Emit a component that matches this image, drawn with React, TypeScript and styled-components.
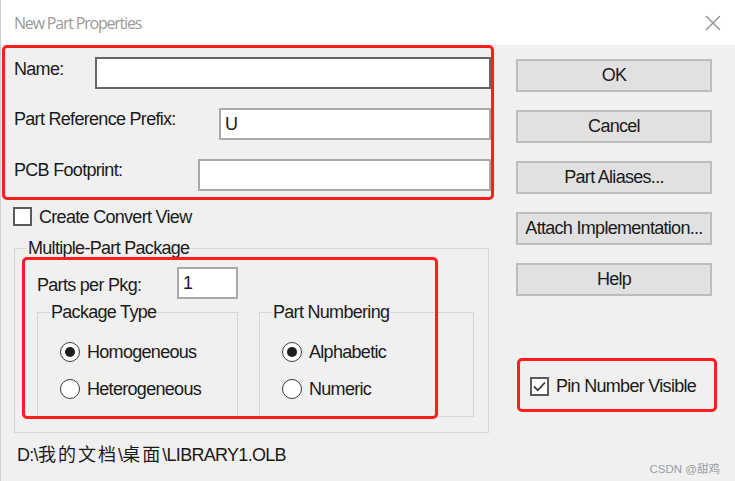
import styled, { createGlobalStyle } from "styled-components";

const GlobalStyle = createGlobalStyle`
  html, body {
    margin: 0;
    padding: 0;
    background: #f0f0f0;
  }
  * {
    box-sizing: border-box;
  }
`;

const Window = styled.div`
  width: 735px;
  height: 481px;
  background: #f0f0f0;
  border-left: 1px solid #cfcfcf;
  display: flex;
  flex-direction: column;
  overflow: hidden;
  font-family: "Liberation Sans", Arial, sans-serif;
  font-size: 18px;
  letter-spacing: -0.7px;
  color: #1a1a1a;
`;

const TitleBar = styled.div`
  height: 45px;
  flex: none;
  background: #fff;
  display: flex;
  align-items: center;
  justify-content: space-between;
  padding: 0 14px 0 13px;
`;

const Title = styled.div`
  font-family: "Open Sans", "Noto Sans", sans-serif;
  font-size: 16px;
  letter-spacing: -1.2px;
  color: #9a9a9a;
`;

const CloseIcon = styled.svg`
  width: 16px;
  height: 16px;
  display: block;
`;

const Body = styled.div`
  flex: 1;
  display: flex;
`;

const LeftCol = styled.div`
  width: 495px;
  flex: none;
  display: flex;
  flex-direction: column;
  align-items: flex-start;
`;

const RightCol = styled.div`
  flex: 1;
  display: flex;
  flex-direction: column;
  align-items: flex-start;
  padding-top: 14px;
`;

const Highlight = styled.div`
  border: 3px solid #fe1e1e;
  border-radius: 5px;
`;

const FieldsFrame = styled(Highlight)`
  margin-left: 1px;
  width: 492px;
  height: 155px;
  padding: 9px 0 0 9px;
  display: flex;
  flex-direction: column;
  gap: 19px;
`;

const FieldRow = styled.div`
  display: flex;
  align-items: flex-start;
  height: 32px;
`;

const Label = styled.label<{ $w: number; $top?: number }>`
  width: ${(p) => p.$w}px;
  flex: none;
  line-height: 18px;
  padding-top: ${(p) => p.$top ?? 2}px;
  white-space: nowrap;
`;

const TextBox = styled.div<{ $focus?: boolean; $w?: number }>`
  ${(p) => (p.$w ? `width: ${p.$w}px; flex: none;` : "flex: 1;")}
  height: 32px;
  background: #fff;
  border: 2px solid ${(p) => (p.$focus ? "#666666" : "#a9a9a9")};
  padding: 0 4px;
  display: flex;
  align-items: center;
  line-height: 18px;
`;

const CheckRow = styled.label`
  display: flex;
  align-items: center;
  gap: 7px;
  line-height: 18px;
  white-space: nowrap;
`;

const ConvertRow = styled(CheckRow)`
  margin: 7px 0 0 12px;
`;

const CheckBox = styled.span`
  width: 19px;
  height: 19px;
  flex: none;
  background: #fff;
  border: 2px solid #5a5a5a;
  display: flex;
  align-items: center;
  justify-content: center;
`;

const GroupWrap = styled.div`
  position: relative;
  margin: 13px 0 0 13px;
  width: 475px;
`;

const Group = styled.fieldset<{ $w?: number }>`
  margin: 0;
  padding: 0;
  min-width: 0;
  ${(p) => (p.$w ? `width: ${p.$w}px;` : "width: 100%;")}
  border: 1px solid #d6d6d6;
`;

const Legend = styled.legend`
  margin-left: 12px;
  padding: 0 1px;
  line-height: 18px;
  font-size: 18px;
`;

const MultiBody = styled.div`
  padding: 10px 0 15px 22px;
  display: flex;
  flex-direction: column;
  gap: 4px;
`;

const PartsRow = styled.div`
  display: flex;
  align-items: flex-start;
  height: 32px;
`;

const SubRow = styled.div`
  display: flex;
  gap: 21px;
`;

const SubBody = styled.div`
  padding: 20px 0 16px 22px;
  display: flex;
  flex-direction: column;
  gap: 15px;
`;

const RadioRow = styled.label`
  display: flex;
  align-items: center;
  gap: 7px;
  height: 22px;
  line-height: 18px;
  white-space: nowrap;
`;

const Radio = styled.span<{ $on?: boolean }>`
  width: 20px;
  height: 20px;
  flex: none;
  border-radius: 50%;
  background: #fff;
  border: 1.5px solid #3a3a3a;
  display: flex;
  align-items: center;
  justify-content: center;
  &::after {
    content: "";
    width: 10px;
    height: 10px;
    border-radius: 50%;
    background: ${(p) => (p.$on ? "#1e1e1e" : "transparent")};
  }
`;

const GroupHighlight = styled(Highlight)`
  position: absolute;
  left: 8px;
  top: 18px;
  width: 416px;
  height: 162px;
  pointer-events: none;
`;

const PathText = styled.div`
  margin: 13px 0 0 16px;
  line-height: 18px;
  white-space: nowrap;
  font-family: "Liberation Sans", "Noto Sans CJK SC", sans-serif;
`;

const Cjk = styled.span`
  letter-spacing: 2px;
`;

const Button = styled.button`
  margin-left: 20px;
  width: 196px;
  height: 33px;
  background: #e1e1e1;
  border: 2px solid #bdbdbd;
  font-family: inherit;
  font-size: 18px;
  letter-spacing: -0.7px;
  color: #1a1a1a;
  padding: 0;
  & + & {
    margin-top: 18px;
  }
`;

const PinFrame = styled(Highlight)`
  margin: 62px 0 0 21px;
  width: 200px;
  height: 54px;
  padding: 2px 0 0 10px;
  display: flex;
  align-items: center;
`;

const Watermark = styled.div`
  align-self: flex-end;
  margin: 48px 15px 0 0;
  font-family: "Liberation Sans", "Noto Sans CJK SC", sans-serif;
  font-size: 11.5px;
  letter-spacing: 0;
  color: #9d9d9d;
`;

const buttons = ["OK", "Cancel", "Part Aliases...", "Attach Implementation...", "Help"];

export default function App() {
  return (
    <>
      <GlobalStyle />
      <Window>
        <TitleBar>
          <Title>New Part Properties</Title>
          <CloseIcon viewBox="0 0 16 16">
            <path d="M1 1 L15 15 M15 1 L1 15" stroke="#8c8c8c" strokeWidth="1.3" fill="none" />
          </CloseIcon>
        </TitleBar>
        <Body>
          <LeftCol>
            <FieldsFrame>
              <FieldRow>
                <Label $w={81} $top={3}>Name:</Label>
                <TextBox $focus />
              </FieldRow>
              <FieldRow>
                <Label $w={205}>Part Reference Prefix:</Label>
                <TextBox>U</TextBox>
              </FieldRow>
              <FieldRow>
                <Label $w={184}>PCB Footprint:</Label>
                <TextBox />
              </FieldRow>
            </FieldsFrame>

            <ConvertRow>
              <CheckBox />
              Create Convert View
            </ConvertRow>

            <GroupWrap>
              <Group>
                <Legend>Multiple-Part Package</Legend>
                <MultiBody>
                  <PartsRow>
                    <Label $w={140} $top={9}>Parts per Pkg:</Label>
                    <TextBox $w={61}>1</TextBox>
                  </PartsRow>
                  <SubRow>
                    <Group $w={201}>
                      <Legend>Package Type</Legend>
                      <SubBody>
                        <RadioRow>
                          <Radio $on />
                          Homogeneous
                        </RadioRow>
                        <RadioRow>
                          <Radio />
                          Heterogeneous
                        </RadioRow>
                      </SubBody>
                    </Group>
                    <Group $w={215}>
                      <Legend>Part Numbering</Legend>
                      <SubBody>
                        <RadioRow>
                          <Radio $on />
                          Alphabetic
                        </RadioRow>
                        <RadioRow>
                          <Radio />
                          Numeric
                        </RadioRow>
                      </SubBody>
                    </Group>
                  </SubRow>
                </MultiBody>
              </Group>
              <GroupHighlight />
            </GroupWrap>

            <PathText>
              D:\<Cjk>我的文档</Cjk>\<Cjk>桌面</Cjk>\LIBRARY1.OLB
            </PathText>
          </LeftCol>

          <RightCol>
            {buttons.map((b) => (
              <Button key={b}>{b}</Button>
            ))}
            <PinFrame>
              <CheckRow>
                <CheckBox>
                  <svg width="15" height="15" viewBox="0 0 15 15">
                    <path d="M2 7.5 L5.8 11.3 L13 3.5" stroke="#3a3a3a" strokeWidth="1.8" fill="none" />
                  </svg>
                </CheckBox>
                Pin Number Visible
              </CheckRow>
            </PinFrame>
            <Watermark>CSDN @甜鸡</Watermark>
          </RightCol>
        </Body>
      </Window>
    </>
  );
}
